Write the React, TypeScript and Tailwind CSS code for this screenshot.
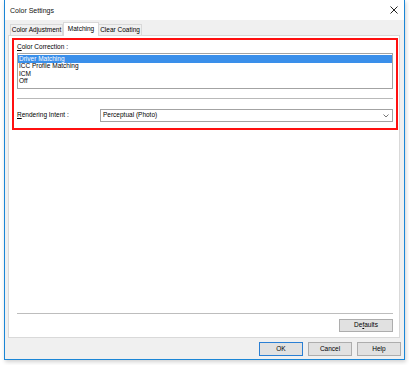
export default function App() {
    const items = ["Driver Matching", "ICC Profile Matching", "ICM", "Off"]

    return (
        <div className="w-[409px] h-[365px] bg-white overflow-hidden text-black font-['Liberation_Sans',Arial,sans-serif] text-[6.5px] leading-none">
            <div className="ml-[4px] w-[401px] h-[360px] flex flex-col bg-[#f0f0f0] border-x border-b border-[#1b86d6] shadow-[1px_2px_4px_rgba(0,0,0,0.18)]">

                {/* title bar */}
                <div className="h-[20px] shrink-0 bg-white flex flex-row items-center justify-between pl-[5px] pr-[5px]">
                    <span className="text-[7px] text-[#111]">Color Settings</span>
                    <svg width="8" height="8" viewBox="0 0 8 8" className="mr-[1px]">
                        <path d="M0.5 0.5 L7.5 7.5 M7.5 0.5 L0.5 7.5" stroke="#222" strokeWidth="1" />
                    </svg>
                </div>

                {/* tabs */}
                <div className="h-[15px] shrink-0 flex flex-row items-end pl-[5px]">
                    <div className="w-[53px] h-[11px] flex items-center justify-center bg-[#f0f0f0] border border-b-0 border-[#d9d9d9]">
                        Color Adjustment
                    </div>
                    <div className="w-[36px] h-[14px] -mb-[1px] z-10 flex items-center justify-center bg-white border border-b-0 border-[#d9d9d9]">
                        Matching
                    </div>
                    <div className="w-[43px] h-[11px] flex items-center justify-center bg-[#f0f0f0] border border-b-0 border-l-0 border-[#d9d9d9]">
                        Clear Coating
                    </div>
                </div>

                {/* panel */}
                <div className="ml-[3px] mr-[4px] h-[303px] shrink-0 flex flex-col bg-white border border-[#d9d9d9]">

                    <div className="ml-[3px] mr-[1px] mt-[2px] h-[92px] flex flex-col border-2 border-[#ff1010] px-[3px] pt-[3px] pb-[6px]">
                        <div className="h-[8px] flex items-center">
                            <span><span className="underline">C</span>olor Correction :</span>
                        </div>

                        <div className="mt-[2px] h-[36px] border border-[#a3a3a3] bg-white pt-[1px] flex flex-col">
                            {items.map((it, i) => (
                                <div
                                    key={it}
                                    className={i === 0
                                        ? "h-[7.5px] flex items-center pl-[1px] bg-[#3a8fea] text-white"
                                        : "h-[7.5px] flex items-center pl-[1px]"}
                                >
                                    {it}
                                </div>
                            ))}
                        </div>

                        <div className="mt-[9px] h-[1px] bg-[#b9b9b9]" />

                        <div className="mt-[10px] h-[13px] flex flex-row items-center">
                            <span className="w-[83px]"><span className="underline">R</span>endering Intent :</span>
                            <div className="flex-1 h-full flex flex-row items-center justify-between border border-[#a3a3a3] bg-white pl-[2px] pr-[3px]">
                                <span>Perceptual (Photo)</span>
                                <svg width="6" height="4" viewBox="0 0 6 4">
                                    <path d="M0.5 0.5 L3 3 L5.5 0.5" stroke="#666" strokeWidth="0.9" fill="none" />
                                </svg>
                            </div>
                        </div>
                    </div>

                    <div className="flex-1" />

                    <div className="ml-[8px] mr-[6px] h-[1px] bg-[#bdbdbd]" />
                    <div className="mt-[5px] mb-[5px] mr-[6px] flex flex-row justify-end">
                        <button className="w-[54px] h-[13px] flex items-center justify-center bg-[#e1e1e1] border border-[#adadad]">
                            <span>De<span className="underline">f</span>aults</span>
                        </button>
                    </div>
                </div>

                {/* dialog buttons */}
                <div className="mt-[4px] pr-[3px] flex flex-row justify-end gap-[5px]">
                    <button className="w-[44px] h-[14px] flex items-center justify-center bg-[#e1e1e1] border border-[#2a7fd4]">
                        OK
                    </button>
                    <button className="w-[44px] h-[14px] flex items-center justify-center bg-[#e1e1e1] border border-[#adadad]">
                        Cancel
                    </button>
                    <button className="w-[44px] h-[14px] flex items-center justify-center bg-[#e1e1e1] border border-[#adadad]">
                        Help
                    </button>
                </div>
            </div>
        </div>
    )
}
